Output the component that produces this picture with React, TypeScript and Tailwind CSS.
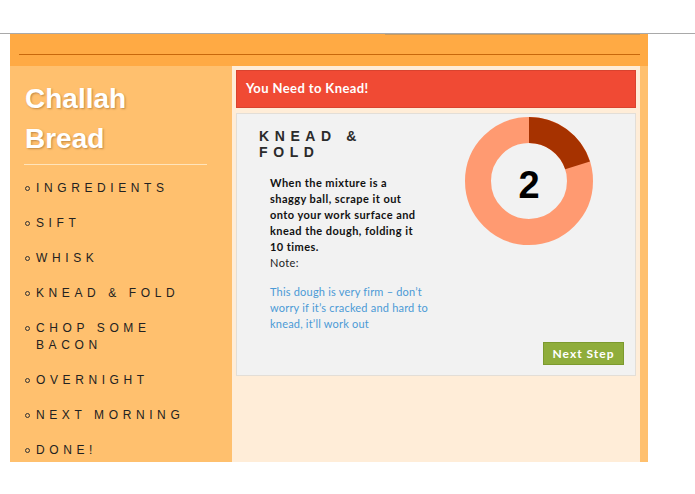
import React from 'react';

const steps = [
  'Ingredients',
  'Sift',
  'Whisk',
  'Knead & Fold',
  'Chop some bacon',
  'Overnight',
  'Next morning',
  'Done!',
];

const Donut = ({ value, total }: { value: number; total: number }) => {
  const r = 51;
  const c = 2 * Math.PI * r;
  const part = (value / total) * c;
  return (
    <svg width="128" height="128" viewBox="0 0 128 128" className="block">
      <circle cx="64" cy="64" r={r} fill="none" stroke="#ff9a71" strokeWidth="26" />
      <circle
        cx="64"
        cy="64"
        r={r}
        fill="none"
        stroke="#a63200"
        strokeWidth="26"
        strokeDasharray={`${part} ${c}`}
        transform="rotate(-90 64 64)"
      />
    </svg>
  );
};

export default function App() {
  return (
    <div className="min-h-[494px] bg-white" style={{ fontFamily: '"Liberation Sans", Arial, sans-serif' }}>
      <div className="h-[33px]" />
      <div className="h-px bg-[#a9a9a9]" />
      <div className="ml-[10px] w-[638px]">
        {/* top bar */}
        <div className="h-[32px] bg-[#ffaa44] pt-[20px] relative">
          <div className="absolute top-0 left-[375px] right-[8px] h-px bg-[#c99a5c]" />
          <div className="ml-[9px] mr-[8px] h-px bg-[#c8680c]" />
        </div>

        <div className="flex h-[396px] bg-[#ffc06e]">
          {/* sidebar */}
          <aside className="w-[222px] pt-[13px] pl-[15px] pr-[25px]">
            <h1
              className="text-[28px] leading-[40px] font-bold text-white"
              style={{ textShadow: '1px 1px 2px rgba(120,70,20,0.45)' }}
            >
              Challah
              <br />
              Bread
            </h1>
            <div className="mt-[5px] -ml-px h-px bg-[#ffe4bb]" />
            <ul className="mt-[15px] flex flex-col gap-[18px]">
              {steps.map((s) => (
                <li key={s} className="flex items-start">
                  <span className="flex h-[17px] w-[11px] shrink-0 items-center">
                    <span className="block h-[5px] w-[5px] rounded-full border border-[#333]" />
                  </span>
                  <span className="text-[12px] leading-[17px] uppercase tracking-[4.6px] text-[#222]">
                    {s}
                  </span>
                </li>
              ))}
            </ul>
          </aside>

          {/* main */}
          <main className="w-[408px] bg-[#ffedd8] p-[4px]">
            <div className="flex h-[38px] items-center border border-[#d9432f] bg-[#f04a34] pl-[9px]">
              <span
                className="text-[13px] font-bold tracking-[0.4px] text-white"
                style={{ fontFamily: 'Lato, "Noto Sans", sans-serif' }}
              >
                You Need to Knead!
              </span>
            </div>

            <div className="mt-[5px] flex h-[263px] flex-col border border-[#e3ded7] bg-[#f2f2f2]">
              <div className="flex items-start">
                <div className="w-[190px] pl-[22px] pt-[14px]">
                  <h2 className="w-[166px] text-[14px] leading-[16px] font-bold uppercase tracking-[5.6px] text-[#2b2b2b]">
                    Knead &amp; Fold
                  </h2>
                  <div
                    className="mt-[15px] pl-[11px]"
                    style={{ fontFamily: 'Lato, "Noto Sans", sans-serif' }}
                  >
                    <p className="w-[152px] text-[11px] leading-[16px] font-bold tracking-[0.45px] text-[#111]">
                      When the mixture is a shaggy ball, scrape it out onto your work surface and knead the
                      dough, folding it 10 times.
                    </p>
                    <p className="text-[11px] leading-[16px] tracking-[0.4px] text-[#222]">Note:</p>
                    <p className="mt-[13px] w-[160px] text-[11px] leading-[16px] tracking-[0.2px] text-[#4b9ad6]">
                      This dough is very firm – don’t worry if it’s cracked and hard to knead, it’ll work out
                    </p>
                  </div>
                </div>
                <div className="relative ml-[38px] mt-[3px]">
                  <Donut value={2} total={10} />
                  <span className="absolute inset-0 flex items-center justify-center pt-[9px] text-[38px] font-bold text-black">
                    2
                  </span>
                </div>
              </div>
              <div className="mt-auto mb-[10px] mr-[11px] flex justify-end">
                <button
                  className="h-[23px] w-[81px] border border-[#7c9a2e] bg-[#8fad3b] text-[12px] font-bold tracking-[1px] text-white"
                  style={{ fontFamily: 'Lato, "Noto Sans", sans-serif' }}
                >
                  Next Step
                </button>
              </div>
            </div>
          </main>
        </div>
      </div>
    </div>
  );
}
